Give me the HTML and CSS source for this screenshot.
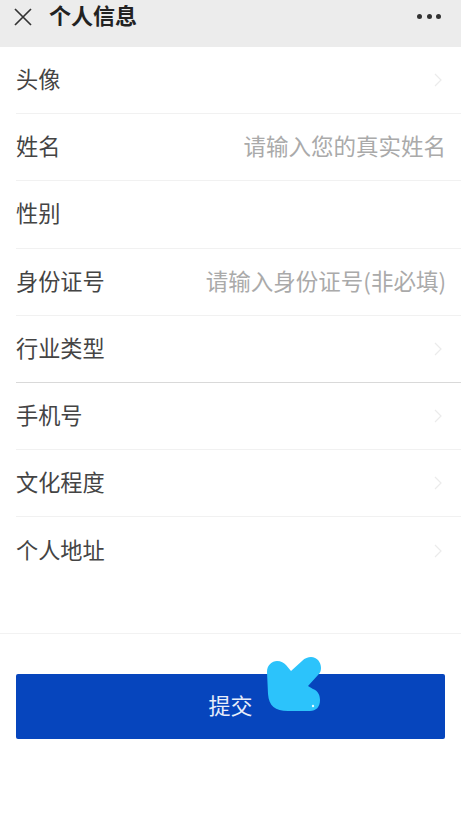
FILE: index.html
```html
<!DOCTYPE html>
<html lang="zh">
<head>
<meta charset="utf-8">
<title>个人信息</title>
<link rel="stylesheet" href="styles.css">
</head>
<body>
<header class="topbar">
  <svg class="close" viewBox="0 0 20 20" width="20" height="20"><path d="M2 2 L18 18 M18 2 L2 18" stroke="#333" stroke-width="1.7" fill="none"/></svg>
  <h1 class="title">个人信息</h1>
  <div class="more"><i></i><i></i><i></i></div>
</header>
<main class="list">
  <div class="row"><span class="label">头像</span><svg class="chev" viewBox="0 0 8 16" width="8" height="16"><path d="M1 2 L7 8 L1 14" stroke="#ebebeb" stroke-width="1.2" fill="none"/></svg></div>
  <div class="row"><span class="label">姓名</span><span class="hint">请输入您的真实姓名</span></div>
  <div class="row"><span class="label">性别</span></div>
  <div class="row"><span class="label">身份证号</span><span class="hint">请输入身份证号(非必填)</span></div>
  <div class="row row-strong"><span class="label">行业类型</span><svg class="chev" viewBox="0 0 8 16" width="8" height="16"><path d="M1 2 L7 8 L1 14" stroke="#ebebeb" stroke-width="1.2" fill="none"/></svg></div>
  <div class="row"><span class="label">手机号</span><svg class="chev" viewBox="0 0 8 16" width="8" height="16"><path d="M1 2 L7 8 L1 14" stroke="#ebebeb" stroke-width="1.2" fill="none"/></svg></div>
  <div class="row"><span class="label">文化程度</span><svg class="chev" viewBox="0 0 8 16" width="8" height="16"><path d="M1 2 L7 8 L1 14" stroke="#ebebeb" stroke-width="1.2" fill="none"/></svg></div>
  <div class="row row-last"><span class="label">个人地址</span><svg class="chev" viewBox="0 0 8 16" width="8" height="16"><path d="M1 2 L7 8 L1 14" stroke="#ebebeb" stroke-width="1.2" fill="none"/></svg></div>
</main>
<footer class="foot">
  <div class="submit"><span class="submit-text">提交</span>
    <svg class="cursor" viewBox="0 0 56 56" width="56" height="56"><path d="M1 16 C1 9 6 5 11 5 C15 5 18 7 20 9 L25 15 L36 5 C39 2 42 1 45 1 C51 1 55 6 55 12 C55 15 54 17 52 19 L42 30 L47 33 C52 35 54 39 54 44 C54 51 50 55 44 55 L22 55 C9 55 3 50 2 38 Z" fill="#2cc3fb"/><circle cx="47" cy="50" r="1.2" fill="#e8fbff"/></svg>
  </div>
</footer>
</body>
</html>
```
FILE: styles.css
```css
html, body { margin: 0; padding: 0; }
body {
  width: 461px;
  height: 815px;
  overflow: hidden;
  background: #fff;
  font-family: "Noto Sans CJK SC", "Liberation Sans", sans-serif;
  color: #444;
}
.topbar {
  height: 47px;
  box-sizing: border-box;
  background: #ececec;
  display: flex;
  align-items: center;
  padding: 0 20px 14px 13px;
}
.close { flex: none; }
.title {
  margin: 0 0 5px 16px;
  font-size: 22px;
  line-height: 25px;
  font-weight: 700;
  color: #222;
  flex: 1;
}
.more { display: flex; gap: 4.500px; }
.more i {
  width: 5px;
  height: 5px;
  border-radius: 50%;
  background: #333;
}
.list { padding-left: 16px; }
.row {
  height: 67.200px;
  box-sizing: border-box;
  display: flex;
  align-items: center;
  justify-content: space-between;
  padding-right: 15px;
  border-bottom: 1px solid #f1f1f1;
}
.row-strong { border-bottom-color: #d9d9d9; }
.row-last { border-bottom: 0; }
.label { font-size: 22.200px; color: #444; margin-bottom: 4px; }
.hint { font-size: 22.500px; color: #aaa; white-space: nowrap; margin-bottom: 4px; }
.chev { margin-right: 4px; }
.foot {
  margin-top: 48.400px;
  border-top: 1px solid #f2f2f2;
  padding: 40px 16px 0;
}
.submit {
  position: relative;
  height: 65px;
  background: #0645bd;
  border-radius: 2px;
  color: #e8eefa;
  font-size: 22px;
  display: flex;
  align-items: center;
  justify-content: center;
}
.submit-text { margin-bottom: 4px; }
.cursor {
  position: absolute;
  left: 250px;
  top: -18px;
}
```
